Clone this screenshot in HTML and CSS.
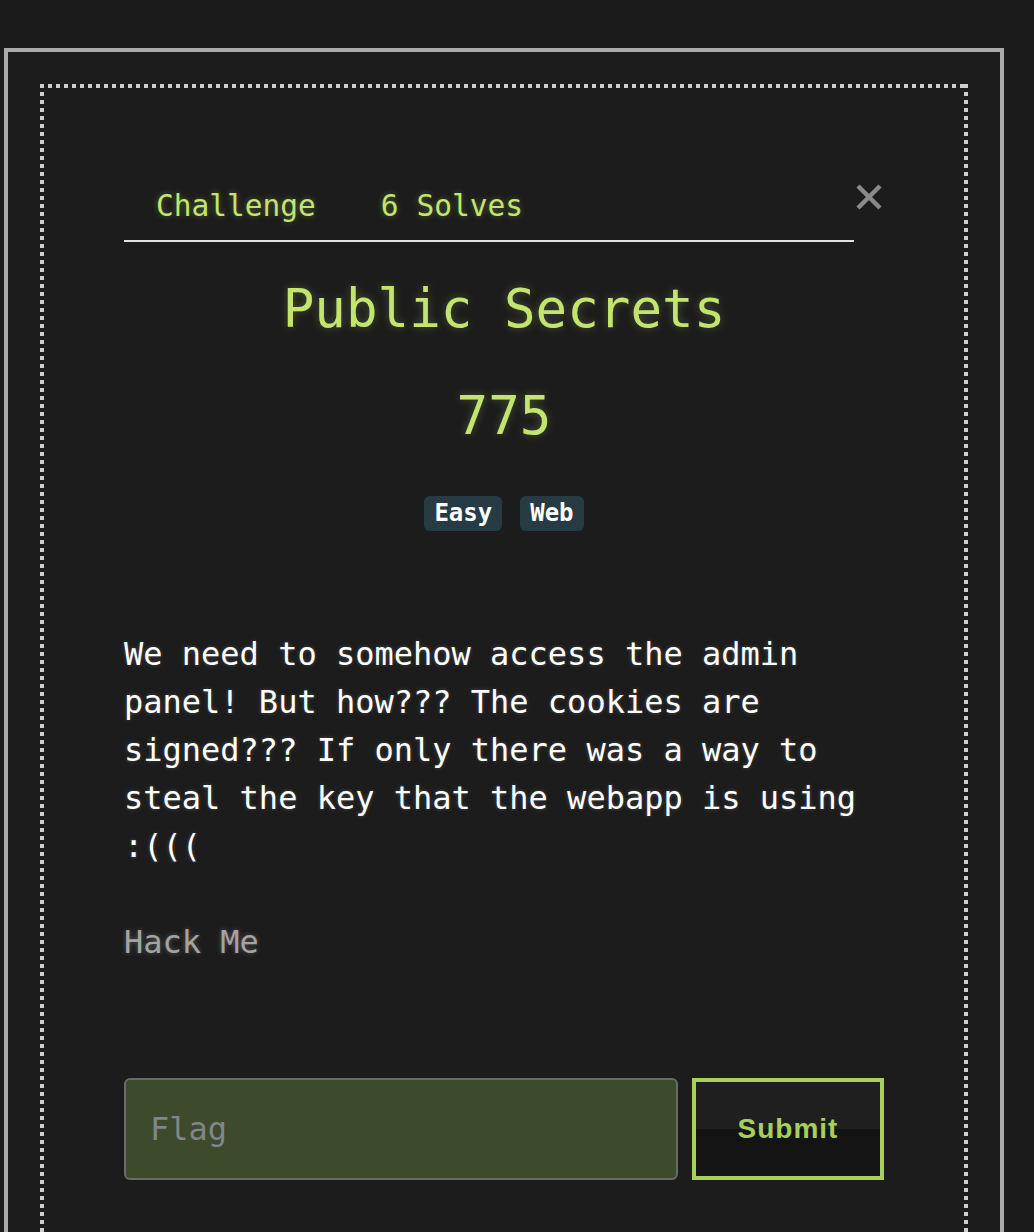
FILE: index.html
```html
<!DOCTYPE html>
<html lang="en">
<head>
<meta charset="utf-8">
<title>Public Secrets</title>
<link rel="stylesheet" href="styles.css">
</head>
<body>
<div class="outer">
  <div class="dotted">
    <div class="modal">
      <button class="close" aria-label="Close">
        <svg width="28" height="28" viewBox="0 0 28 28"><path d="M3 3 L25 25 M25 3 L3 25" stroke="#8a8a8a" stroke-width="4.5" stroke-linecap="butt" fill="none"/></svg>
      </button>
      <ul class="tabs">
        <li class="tab">Challenge</li>
        <li class="tab">6 Solves</li>
      </ul>
      <h2 class="title">Public Secrets</h2>
      <h3 class="points">775</h3>
      <div class="tags">
        <span class="tag">Easy</span>
        <span class="tag">Web</span>
      </div>
      <p class="desc">We need to somehow access the admin panel! But how??? The cookies are signed??? If only there was a way to steal the key that the webapp is using :(((</p>
      <p class="link">Hack Me</p>
      <form class="flag-form">
        <input class="flag-input" type="text" placeholder="Flag">
        <button class="submit" type="button">Submit</button>
      </form>
    </div>
  </div>
</div>
</body>
</html>
```
FILE: styles.css
```css
html, body {
  margin: 0;
  padding: 0;
  background: #1b1b1b;
  overflow: hidden;
}

.outer {
  box-sizing: border-box;
  width: 1000px;
  margin: 48px 0 0 4px;
  border: 4px solid #ababab;
  padding: 32px;
  background: #1c1c1c;
}

.dotted {
  padding: 4px;
  background:
    repeating-linear-gradient(to right, #cfcfcf 0 4px, transparent 4px 8px) top left / 100% 4px no-repeat,
    repeating-linear-gradient(to bottom, #cfcfcf 0 4px, transparent 4px 8px) top left / 4px 100% no-repeat,
    repeating-linear-gradient(to bottom, #cfcfcf 0 4px, transparent 4px 8px) top right / 4px 100% no-repeat;
}

.modal {
  position: relative;
  padding: 100px 80px 80px;
  font-family: "DejaVu Sans Mono", monospace;
}

.close {
  position: absolute;
  top: 95px;
  right: 81px;
  width: 28px;
  height: 28px;
  padding: 0;
  border: 0;
  background: none;
  display: flex;
}

.tabs {
  display: flex;
  list-style: none;
  margin: 0 30px 0 0;
  padding: 0 0 0 0;
  border-bottom: 2px solid #e2e2e2;
}

.tab {
  font-size: 29.5px;
  line-height: 36px;
  padding: 0 33px 16px 32px;
  color: #c3e46e;
  text-shadow: 0 0 6px rgba(195, 228, 110, 0.35);
}

.title,
.points {
  margin: 35px 0 0;
  font-size: 52.5px;
  line-height: 63px;
  font-weight: normal;
  text-align: center;
  color: #c3e46e;
  text-shadow: 0 0 8px rgba(195, 228, 110, 0.3);
}

.points {
  margin-top: 44px;
}

.tags {
  margin-top: 49px;
  display: flex;
  justify-content: center;
  gap: 18px;
}

.tag {
  font-weight: bold;
  font-size: 24px;
  line-height: 35px;
  padding: 0 10px;
  color: #ffffff;
  background: #263b43;
  border-radius: 6px;
}

.desc {
  margin: 99px 0 0;
  font-size: 32px;
  line-height: 48px;
  color: #ffffff;
  text-shadow: 0 0 4px rgba(255, 255, 255, 0.2);
}

.link {
  margin: 48px 0 0;
  font-size: 32px;
  line-height: 48px;
  color: #a3a3a3;
  text-shadow: 0 0 5px rgba(200, 200, 200, 0.35);
}

.flag-form {
  margin-top: 112px;
  display: flex;
  gap: 14px;
}

.flag-input {
  box-sizing: border-box;
  width: 554px;
  height: 102px;
  border: 2px solid #6a6a6a;
  border-radius: 6px;
  background: #3d4a2b;
  padding: 0 24px;
  font-family: "DejaVu Sans Mono", monospace;
  font-size: 32px;
  color: #ffffff;
  outline: none;
}

.flag-input::placeholder {
  color: #7f8787;
}

.submit {
  box-sizing: border-box;
  width: 192px;
  height: 102px;
  border: 4px solid #a8cf5a;
  border-radius: 0;
  background: linear-gradient(to bottom, #1f1f1f 0 50%, #141414 50% 100%);
  font-family: "Liberation Sans", Arial, sans-serif;
  font-weight: bold;
  font-size: 28px;
  letter-spacing: 1px;
  color: #a8cf5a;
  padding: 0;
}
```
